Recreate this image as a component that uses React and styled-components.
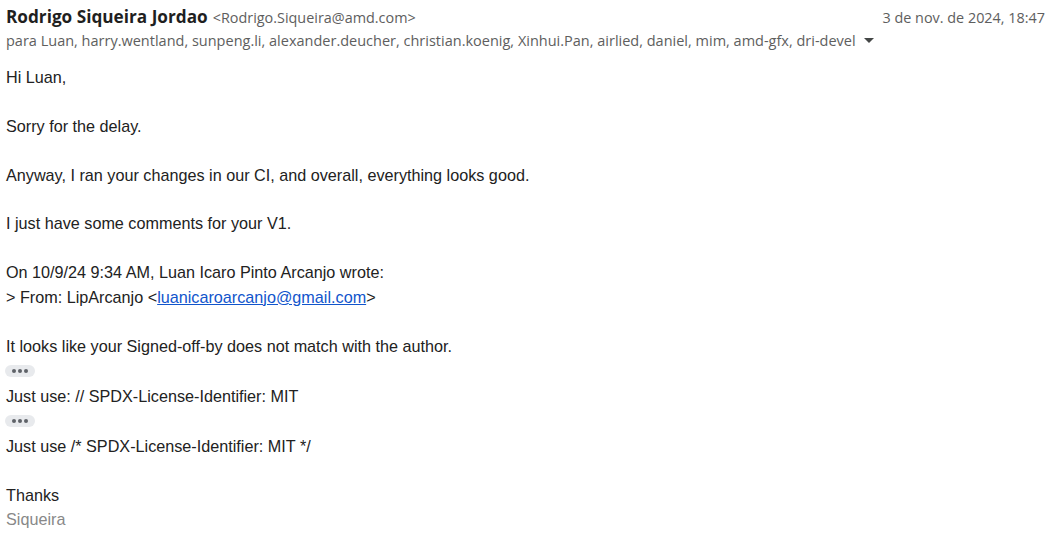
import React from "react";
import styled, { createGlobalStyle } from "styled-components";

const Global = createGlobalStyle`
  html, body { margin: 0; padding: 0; background: #ffffff; }
  body { font-family: "Liberation Sans", Arial, sans-serif; }
`;

const Page = styled.div`
  width: 1047px;
  height: 534px;
  box-sizing: border-box;
  padding: 5px 2px 0 6px;
  background: #fff;
  overflow: hidden;
`;

const HeaderRow = styled.div`
  display: flex;
  align-items: baseline;
  justify-content: space-between;
  height: 24px;
`;

const Sender = styled.div`
  display: flex;
  align-items: baseline;
  gap: 5px;
`;

const Name = styled.span`
  font-family: "Open Sans", Roboto, sans-serif;
  font-weight: 700;
  font-size: 17.2px;
  color: #1f1f1f;
`;

const Email = styled.span`
  font-family: "Open Sans", Roboto, sans-serif;
  font-size: 14.4px;
  color: #5e5e5e;
`;

const DateText = styled.span`
  font-family: "Open Sans", Roboto, sans-serif;
  font-size: 14.4px;
  color: #5e5e5e;
`;

const Recipients = styled.div`
  display: flex;
  align-items: center;
  gap: 6px;
  font-family: "Open Sans", Roboto, sans-serif;
  font-size: 14.5px;
  color: #5e5e5e;
  height: 22px;
`;

const Caret = styled.svg`
  width: 10px;
  height: 5px;
  margin-left: 2px;
`;

const Body = styled.div`
  margin-top: 13.8px;
  font-family: "Liberation Sans", Arial, sans-serif;
  font-size: 16.2px;
  line-height: 24.45px;
  color: #222222;
`;

const Line = styled.div`
  min-height: 24.45px;
  color: ${(p) => (p.$muted ? "#888888" : "#222222")};
`;

const Link = styled.a`
  color: #1155cc;
  text-decoration: underline;
`;

const DotsRow = styled.div`
  height: 25.6px;
  display: flex;
  align-items: center;
`;

const DotsButton = styled.span`
  display: inline-flex;
  align-items: center;
  justify-content: center;
  gap: 2px;
  width: 30px;
  height: 12px;
  border-radius: 6px;
  background: #e8eaed;
  margin-left: -1px;
`;

const Dot = styled.span`
  width: 4px;
  height: 4px;
  border-radius: 50%;
  background: #5f6368;
`;

const Dots = () => (
  <DotsRow>
    <DotsButton>
      <Dot />
      <Dot />
      <Dot />
    </DotsButton>
  </DotsRow>
);

export default function App() {
  return (
    <Page>
      <Global />
      <HeaderRow>
        <Sender>
          <Name>Rodrigo Siqueira Jordao</Name>
          <Email>&lt;Rodrigo.Siqueira@amd.com&gt;</Email>
        </Sender>
        <DateText>3 de nov. de 2024, 18:47</DateText>
      </HeaderRow>
      <Recipients>
        <span>
          para Luan, harry.wentland, sunpeng.li, alexander.deucher, christian.koenig,
          Xinhui.Pan, airlied, daniel, mim, amd-gfx, dri-devel
        </span>
        <Caret viewBox="0 0 10 5">
          <path d="M0 0 L10 0 L5 5 Z" fill="#444746" />
        </Caret>
      </Recipients>
      <Body>
        <Line>Hi Luan,</Line>
        <Line />
        <Line>Sorry for the delay.</Line>
        <Line />
        <Line>Anyway, I ran your changes in our CI, and overall, everything looks good.</Line>
        <Line />
        <Line>I just have some comments for your V1.</Line>
        <Line />
        <Line>On 10/9/24 9:34 AM, Luan Icaro Pinto Arcanjo wrote:</Line>
        <Line>
          &gt; From: LipArcanjo &lt;<Link href="#">luanicaroarcanjo@gmail.com</Link>&gt;
        </Line>
        <Line />
        <Line>It looks like your Signed-off-by does not match with the author.</Line>
        <Dots />
        <Line>Just use: // SPDX-License-Identifier: MIT</Line>
        <Dots />
        <Line>Just use /* SPDX-License-Identifier: MIT */</Line>
        <Line />
        <Line>Thanks</Line>
        <Line $muted>Siqueira</Line>
      </Body>
    </Page>
  );
}
